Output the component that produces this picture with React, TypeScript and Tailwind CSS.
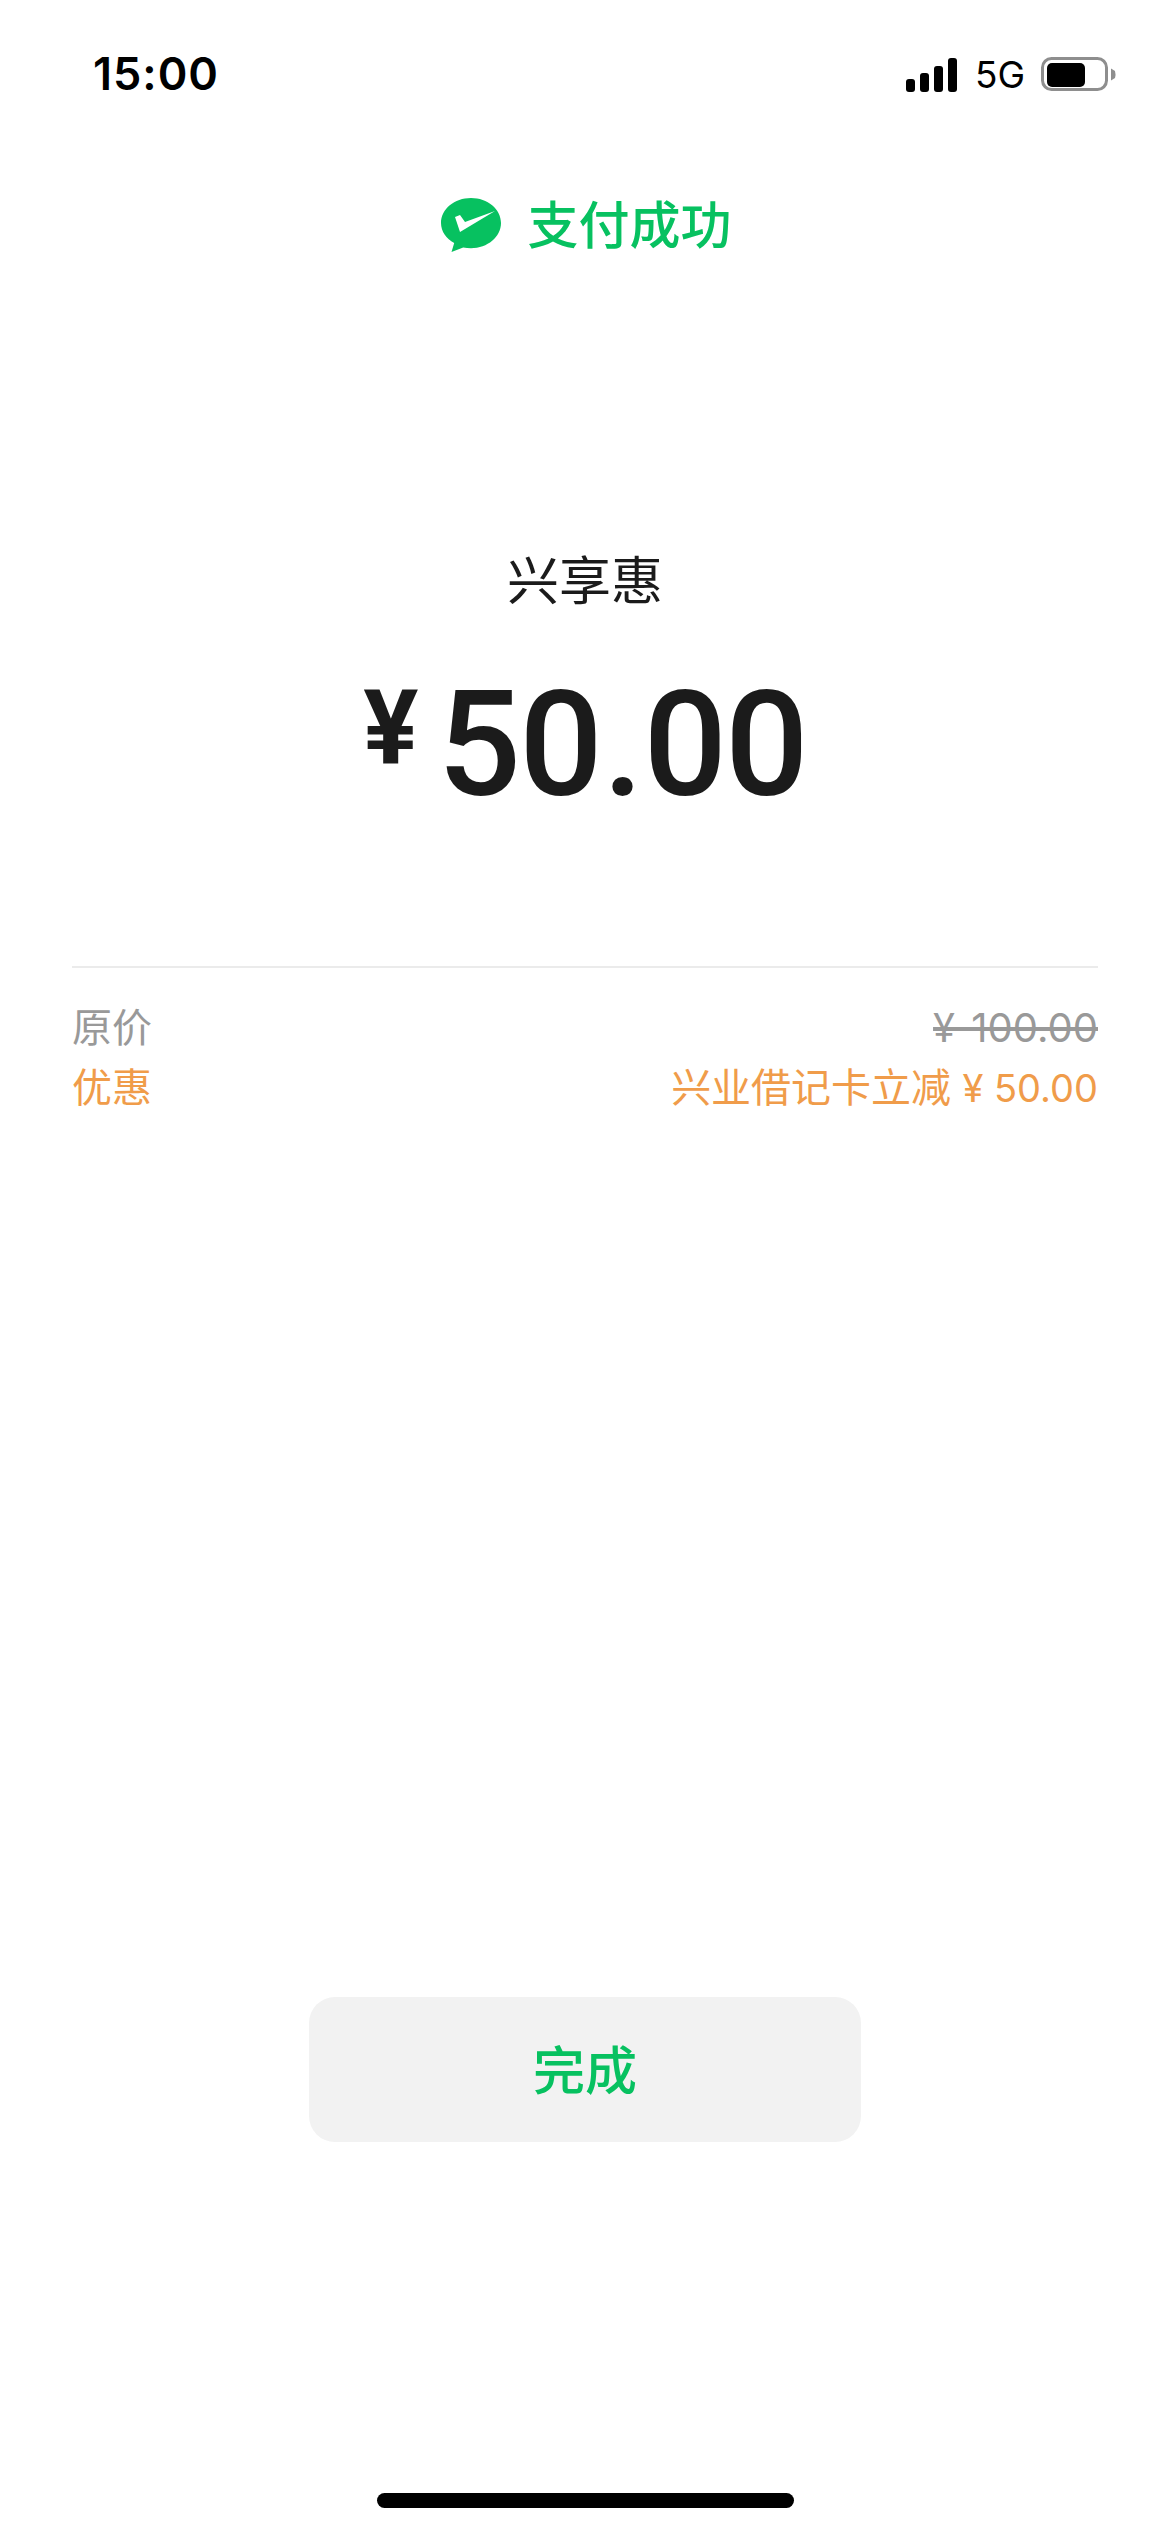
import React from 'react';

const cjk = "font-['Inter','Noto_Sans_CJK_SC',sans-serif]";

const SignalIcon = () => (
  <svg width="51" height="34" viewBox="0 0 51 34" className="block">
    <rect x="0" y="21" width="9" height="13" rx="3" fill="#000" />
    <rect x="14" y="15" width="9" height="19" rx="3" fill="#000" />
    <rect x="28" y="8" width="9" height="26" rx="3" fill="#000" />
    <rect x="42" y="0" width="9" height="34" rx="3" fill="#000" />
  </svg>
);

const BatteryIcon = () => (
  <svg width="75" height="35" viewBox="0 0 75 35" className="block">
    <rect x="1.5" y="1.5" width="64" height="31" rx="9" fill="none" stroke="#8e8e8e" strokeWidth="3" />
    <rect x="6" y="6" width="38" height="24" rx="5" fill="#000" />
    <path d="M70 11.5 L74 14 Q75 17.5 74 21 L70 23.5 Z" fill="#8e8e8e" />
  </svg>
);

const PayLogo = () => (
  <svg width="60" height="54" viewBox="0 0 60 54" className="block">
    <path
      d="M30 0C13.400 0 0 11.200 0 25c0 8.400 5.200 15.700 13.200 20.100L10.500 54l11.700-4.600c2.500.5 5.100.8 7.800.8 16.600 0 30-11.400 30-25.200S46.600 0 30 0Z"
      fill="#07c160"
    />
    <path d="M14 19l5-2 5 7 30-11L19 34Z" fill="#fff" />
  </svg>
);

const App: React.FC = () => {
  return (
    <div className={`w-[1170px] h-[2532px] bg-white flex flex-col ${cjk}`}>
      {/* status bar */}
      <div className="flex items-start justify-between pt-[56px] pl-[93px] pr-[54px] h-[198px]">
        <span className="text-[45px] leading-[36px] font-semibold tracking-[1px] text-black">15:00</span>
        <div className="flex items-center pt-[1px]">
          <SignalIcon />
          <span className="ml-[18px] mr-[16px] text-[37px] leading-[34px] text-black">5G</span>
          <BatteryIcon />
        </div>
      </div>

      {/* result title */}
      <div className="flex items-center justify-center h-[54px] gap-[26px] pl-[3px]">
        <PayLogo />
        <span className="text-[51px] leading-[56px] font-medium text-[#07c160] pt-[2px]">支付成功</span>
      </div>

      {/* merchant and amount */}
      <div className="mt-[300px] text-center text-[52px] leading-[60px] text-[#1b1b1b]">兴享惠</div>
      <div className="mt-[80px] flex items-start justify-center font-['Roboto',sans-serif] text-[#1b1b1b]">
        <span className="text-[103px] leading-[72px] font-bold mr-[19px]">¥</span>
        <span className="text-[147px] leading-[106px] font-medium tracking-[-2px]">
          50<span className="mx-[2px]">.</span>00
        </span>
      </div>

      {/* price rows */}
      <div className="mx-[72px] mt-[168px] border-t-2 border-[#ebebeb] pt-[30px] text-[40px] leading-[60px]">
        <div className="flex justify-between text-[#999999]">
          <span>原价</span>
          <span className="line-through [word-spacing:5px]">¥ 100.00</span>
        </div>
        <div className="flex justify-between text-[#f09c4a]">
          <span>优惠</span>
          <span>
            兴业借记卡立减 <span className="text-[38px]">¥ 50.00</span>
          </span>
        </div>
      </div>

      {/* done button */}
      <div className="flex justify-center mt-auto">
        <button className="w-[552px] h-[145px] pt-[5px] rounded-[26px] bg-[#f2f2f2] text-[52px] font-medium text-[#07c160]">
          完成
        </button>
      </div>

      {/* home indicator */}
      <div className="flex justify-center mt-[351px] pb-[24px]">
        <div className="w-[417px] h-[15px] rounded-full bg-black" />
      </div>
    </div>
  );
};

export default App;
